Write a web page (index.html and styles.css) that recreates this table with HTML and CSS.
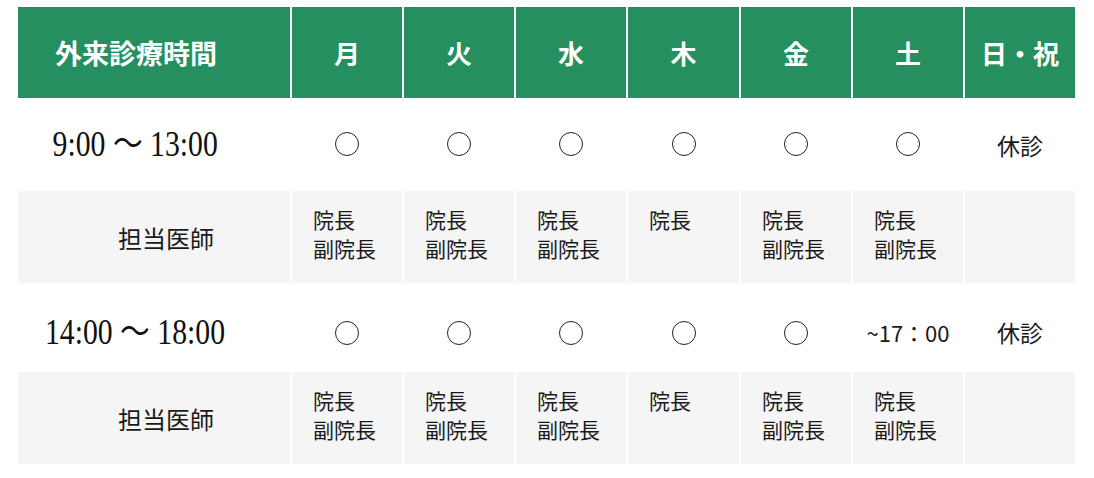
FILE: index.html
```html
<!DOCTYPE html>
<html lang="ja">
<head>
<meta charset="utf-8">
<title>外来診療時間</title>
<link rel="stylesheet" href="styles.css">
</head>
<body>
<div class="wrap">
<table class="schedule">
  <colgroup>
    <col class="c-label">
    <col class="c-day"><col class="c-day"><col class="c-day"><col class="c-day-w">
    <col class="c-day"><col class="c-day"><col class="c-day">
  </colgroup>
  <thead>
    <tr class="head">
      <th class="head-label">外来診療時間</th>
      <th>月</th><th>火</th><th>水</th><th>木</th><th>金</th><th>土</th><th>日・祝</th>
    </tr>
  </thead>
  <tbody>
    <tr class="time-row r1">
      <td class="time"><span class="time-text">9:00 ～ 13:00</span></td>
      <td><span class="mark"></span></td>
      <td><span class="mark"></span></td>
      <td><span class="mark"></span></td>
      <td><span class="mark"></span></td>
      <td><span class="mark"></span></td>
      <td><span class="mark"></span></td>
      <td class="closed">休診</td>
    </tr>
    <tr class="doc-row">
      <td class="doc-label">担当医師</td>
      <td class="doc">院長<br>副院長</td>
      <td class="doc">院長<br>副院長</td>
      <td class="doc">院長<br>副院長</td>
      <td class="doc">院長</td>
      <td class="doc">院長<br>副院長</td>
      <td class="doc">院長<br>副院長</td>
      <td class="doc"></td>
    </tr>
    <tr class="time-row r2">
      <td class="time"><span class="time-text">14:00 ～ 18:00</span></td>
      <td><span class="mark"></span></td>
      <td><span class="mark"></span></td>
      <td><span class="mark"></span></td>
      <td><span class="mark"></span></td>
      <td><span class="mark"></span></td>
      <td class="until">~17：00</td>
      <td class="closed">休診</td>
    </tr>
    <tr class="doc-row">
      <td class="doc-label">担当医師</td>
      <td class="doc">院長<br>副院長</td>
      <td class="doc">院長<br>副院長</td>
      <td class="doc">院長<br>副院長</td>
      <td class="doc">院長</td>
      <td class="doc">院長<br>副院長</td>
      <td class="doc">院長<br>副院長</td>
      <td class="doc"></td>
    </tr>
  </tbody>
</table>
</div>
</body>
</html>
```

FILE: styles.css
```css
html, body {
  margin: 0;
  padding: 0;
  background: #ffffff;
}

body {
  font-family: "Noto Sans CJK JP", "Noto Sans", sans-serif;
  color: #1a1a1a;
}

.wrap {
  padding: 5px 0 0 16px;
}

.schedule {
  border-collapse: separate;
  border-spacing: 2px;
  table-layout: fixed;
  width: 1061px;
}

.c-label { width: 272px; }
.c-day { width: 110px; }
.c-day-w { width: 111px; }

.schedule th,
.schedule td {
  padding: 0;
  text-align: center;
  vertical-align: middle;
}

.head th {
  height: 91px;
  background: #258f60;
  color: #ffffff;
  font-size: 26px;
  font-weight: 700;
  line-height: 1;
}

.head th.head-label {
  text-align: left;
  padding-left: 37px;
  font-size: 27px;
}

.time-row.r1 td {
  height: 89px;
}

.time-row.r2 td {
  height: 76px;
  padding-top: 9px;
}

.time {
  padding-right: 38px !important;
  color: #111;
}

.time-text {
  display: inline-block;
  font-family: "Liberation Serif", "Noto Sans CJK JP", serif;
  font-size: 35px;
  line-height: 1;
  transform: scaleX(0.85);
  white-space: nowrap;
}

.mark {
  display: inline-block;
  width: 22px;
  height: 22px;
  border: 1px solid #222;
  border-radius: 50%;
  vertical-align: middle;
}

.time-row.r1 .mark {
  position: relative;
  top: -2px;
}

.closed {
  font-size: 23px;
}

.until {
  font-size: 22px;
}

.doc-row td {
  height: 92px;
  background: #f5f5f5;
}

.doc-label {
  font-size: 24px;
  padding-left: 24px !important;
}

.doc-row td.doc {
  vertical-align: top;
  text-align: left;
  padding: 14px 0 0 21px;
  height: 78px;
  font-size: 21px;
  line-height: 29px;
}
```
